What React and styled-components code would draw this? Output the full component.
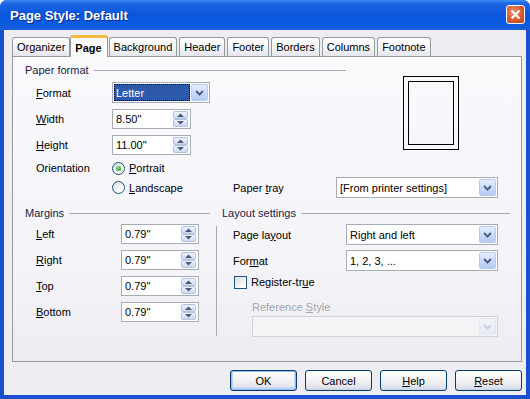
import React from 'react'
import styled, { createGlobalStyle, css } from 'styled-components'

const GlobalStyle = createGlobalStyle`
  html, body { margin: 0; padding: 0; background: #ffffff; }
  body {
    font-family: "Liberation Sans", Arial, sans-serif;
    font-size: 11px;
    color: #000;
  }
`

const Window = styled.div`
  width: 530px;
  height: 399px;
  box-sizing: border-box;
  display: flex;
  flex-direction: column;
  background: #1c4fd0;
  padding: 0 4px 4px 4px;
  border-radius: 7px 7px 0 0;
  overflow: hidden;
`

const TitleBar = styled.div`
  height: 30px;
  margin: 0 -4px;
  padding: 0 5px 0 10px;
  display: flex;
  align-items: center;
  justify-content: space-between;
  background: linear-gradient(#3d8ff6 0%, #1f68e4 10%, #0a56dd 45%, #0b5ae2 80%, #1b5ed8 100%);
`

const Title = styled.div`
  color: #fff;
  font-weight: bold;
  font-size: 13px;
  text-shadow: 1px 1px 0 #0b2a8a;
`

const CloseButton = styled.div`
  width: 19px;
  height: 19px;
  margin-top: -1px;
  box-sizing: border-box;
  border: 1px solid #fff;
  border-radius: 3px;
  background: radial-gradient(circle at 40% 35%, #f0906a, #d9532a 60%, #c2421c);
  display: flex;
  align-items: center;
  justify-content: center;
`

const Body = styled.div`
  flex: 1;
  background: #eeedf2;
  display: flex;
  flex-direction: column;
  padding: 5px 4px 0 8px;
`

const TabRow = styled.div`
  display: flex;
  align-items: flex-end;
  gap: 2px;
  height: 21px;
  position: relative;
  z-index: 1;
`

const Tab = styled.div`
  height: 19px;
  box-sizing: border-box;
  padding: 0 4px;
  display: flex;
  align-items: center;
  border: 1px solid #919b9c;
  border-bottom: none;
  border-radius: 3px 3px 0 0;
  background: linear-gradient(#ffffff, #f3f3f7 60%, #e4e6ee);
  white-space: nowrap;
  ${p => p.$active && css`
    height: 22px;
    margin: 0 -1px -1px -2px;
    padding: 0 5px 0 4px;
    font-weight: bold;
    background: #fbfbfd;
    border-top: 3px solid #f5b83c;
    border-radius: 3px 3px 0 0;
  `}
`

const Panel = styled.div`
  height: 306px;
  box-sizing: border-box;
  border: 1px solid #919b9c;
  background: linear-gradient(#fafafd, #f3f3f8 70%, #ececf2);
  padding: 6px 11px 0 12px;
  display: flex;
  flex-direction: column;
`

const TopSection = styled.div`
  display: flex;
`

const PaperGroup = styled.div`
  width: 321px;
`

const GroupHead = styled.div`
  display: flex;
  align-items: center;
  height: 14px;
  color: #1a1a48;
  &::after {
    content: '';
    flex: 1;
    height: 1px;
    background: #a9a9b0;
    margin-left: 5px;
  }
`

const FormGrid = styled.div`
  display: grid;
  grid-template-columns: 76px auto;
  grid-template-rows: 21px 20px 20px 14px;
  row-gap: 6px;
  align-items: center;
  padding-left: 11px;
  margin-top: 5px;
`

const Label = styled.div`
  white-space: nowrap;
  color: ${p => (p.$disabled ? '#a6a6ac' : '#000')};
  ${p => p.$w && css`width: ${p.$w}px; flex: none;`}
`

const U = styled.span`
  text-decoration: underline;
`

const PreviewArea = styled.div`
  padding: 13px 0 0 57px;
`

const PageOuter = styled.div`
  width: 56px;
  height: 74px;
  box-sizing: border-box;
  border: 1px solid #000;
  padding: 4px;
`

const PageInner = styled.div`
  width: 100%;
  height: 100%;
  box-sizing: border-box;
  border: 1px solid #000;
`

const LandscapeRow = styled.div`
  display: flex;
  align-items: center;
  height: 21px;
  margin-top: 2px;
  padding-left: 87px;
`

const Option = styled.div`
  display: flex;
  align-items: center;
  gap: 4px;
  ${p => p.$w && css`width: ${p.$w}px;`}
`

const Radio = styled.div`
  width: 13px;
  height: 13px;
  box-sizing: border-box;
  border-radius: 50%;
  border: 1px solid #1c5180;
  background: linear-gradient(135deg, #dcdcd6, #ffffff 80%);
  display: flex;
  align-items: center;
  justify-content: center;
  &::after {
    content: '';
    display: ${p => (p.$checked ? 'block' : 'none')};
    width: 5px;
    height: 5px;
    border-radius: 50%;
    background: radial-gradient(circle at 35% 35%, #7ee07e, #1f9d1f);
  }
`

const Checkbox = styled.div`
  width: 13px;
  height: 13px;
  box-sizing: border-box;
  border: 1px solid #1c5180;
  background: linear-gradient(135deg, #dcdcd6, #ffffff 85%);
`

const SelectBox = styled.div`
  width: ${p => p.$w}px;
  height: 21px;
  box-sizing: border-box;
  border: 1px solid ${p => (p.$disabled ? '#cfd3da' : '#a5acb5')};
  background: ${p => (p.$disabled ? '#f4f4f6' : '#fff')};
  display: flex;
  align-items: center;
  padding: 1px;
`

const SelectText = styled.div`
  flex: 1;
  height: 100%;
  display: flex;
  align-items: center;
  padding-left: 2px;
  white-space: nowrap;
  ${p => p.$focused && css`
    background: #2d5aab;
    color: #fff;
    outline: 1px dotted #000;
    outline-offset: -1px;
    margin-right: 1px;
  `}
`

const DropButton = styled.div`
  width: 17px;
  height: 17px;
  box-sizing: border-box;
  border: 1px solid ${p => (p.$disabled ? '#e2e8f4' : '#b8cbef')};
  border-radius: 2px;
  background: ${p => (p.$disabled
    ? 'linear-gradient(#f1f4fa, #e4eaf5)'
    : 'linear-gradient(#e6eefd, #c8d8fa 60%, #b6caf3)')};
  display: flex;
  align-items: center;
  justify-content: center;
`

const SpinBox = styled.div`
  width: ${p => p.$w}px;
  height: 20px;
  box-sizing: border-box;
  border: 1px solid #a5acb5;
  background: #fff;
  display: flex;
  align-items: center;
  padding: 0 2px 0 3px;
`

const SpinValue = styled.div`
  flex: 1;
`

const SpinButtons = styled.div`
  display: flex;
  flex-direction: column;
  width: 15px;
`

const SpinArrow = styled.div`
  height: 8px;
  box-sizing: border-box;
  border: 1px solid #b3c2de;
  border-radius: 2px;
  background: linear-gradient(#eef3fd, #cdd9f2);
  display: flex;
  align-items: center;
  justify-content: center;
`

const BottomGrid = styled.div`
  display: grid;
  grid-template-columns: 185px 12px 1fr;
  grid-template-rows: 14px auto;
  margin-top: 8px;
`

const Separator = styled.div`
  grid-column: 2;
  grid-row: 2;
  justify-self: center;
  width: 1px;
  height: 110px;
  margin-top: 6px;
  background: #a9a9b0;
`

const Column = styled.div`
  grid-row: 2;
  display: flex;
  flex-direction: column;
  padding-left: 11px;
  margin-top: 4px;
`

const Row = styled.div`
  display: flex;
  align-items: center;
  height: ${p => p.$h || 20}px;
  margin-top: ${p => p.$mt || 0}px;
  padding-left: ${p => p.$pl || 0}px;
`

const ButtonRow = styled.div`
  display: flex;
  justify-content: flex-end;
  gap: 8px;
  margin-top: 8px;
`

const Button = styled.div`
  width: 67px;
  height: 21px;
  box-sizing: border-box;
  border: 1px solid #003c74;
  border-radius: 3px;
  background: linear-gradient(#ffffff, #f2f2f4 50%, #e1e4ec 85%, #ccd1dc);
  display: flex;
  align-items: center;
  justify-content: center;
  ${p => p.$default && css`
    box-shadow: inset 0 0 0 1px #98b8ef, inset 0 -1px 0 2px #c6d6f7;
  `}
`

const Chevron = ({ color = '#4b5f86' }) => (
  <svg width="9" height="6" viewBox="0 0 9 6">
    <path d="M1 1 L4.5 4.5 L8 1" fill="none" stroke={color} strokeWidth="2" />
  </svg>
)

const Tri = ({ up }) => (
  <svg width="7" height="4" viewBox="0 0 7 4">
    <path d={up ? 'M0 4 L3.5 0.5 L7 4 Z' : 'M0 0 L3.5 3.5 L7 0 Z'} fill="#4d5a73" />
  </svg>
)

const Select = ({ w, value, focused, disabled }) => (
  <SelectBox $w={w} $disabled={disabled}>
    <SelectText $focused={focused}>{value}</SelectText>
    <DropButton $disabled={disabled}>
      <Chevron color={disabled ? '#c9d3e6' : '#4b5f86'} />
    </DropButton>
  </SelectBox>
)

const Spin = ({ w, value }) => (
  <SpinBox $w={w}>
    <SpinValue>{value}</SpinValue>
    <SpinButtons>
      <SpinArrow><Tri up /></SpinArrow>
      <SpinArrow><Tri /></SpinArrow>
    </SpinButtons>
  </SpinBox>
)

const tabs = ['Organizer', 'Page', 'Background', 'Header', 'Footer', 'Borders', 'Columns', 'Footnote']

const margins = [
  [<><U>L</U>eft</>, '0.79"'],
  [<><U>R</U>ight</>, '0.79"'],
  [<><U>T</U>op</>, '0.79"'],
  [<><U>B</U>ottom</>, '0.79"'],
]

export default function App() {
  return (
    <>
      <GlobalStyle />
      <Window>
        <TitleBar>
          <Title>Page Style: Default</Title>
          <CloseButton>
            <svg width="11" height="11" viewBox="0 0 11 11">
              <path d="M1.5 1.5 L9.5 9.5 M9.5 1.5 L1.5 9.5" stroke="#fff" strokeWidth="2.2" />
            </svg>
          </CloseButton>
        </TitleBar>
        <Body>
          <TabRow>
            {tabs.map(t => (
              <Tab key={t} $active={t === 'Page'}>{t}</Tab>
            ))}
          </TabRow>
          <Panel>
            <TopSection>
              <PaperGroup>
                <GroupHead>Paper format</GroupHead>
                <FormGrid>
                  <Label><U>F</U>ormat</Label>
                  <Select w={98} value="Letter" focused />
                  <Label><U>W</U>idth</Label>
                  <Spin w={79} value={'8.50"'} />
                  <Label><U>H</U>eight</Label>
                  <Spin w={79} value={'11.00"'} />
                  <Label>Orientation</Label>
                  <Option>
                    <Radio $checked />
                    <span><U>P</U>ortrait</span>
                  </Option>
                </FormGrid>
              </PaperGroup>
              <PreviewArea>
                <PageOuter><PageInner /></PageOuter>
              </PreviewArea>
            </TopSection>

            <LandscapeRow>
              <Option $w={121}>
                <Radio />
                <span><U>L</U>andscape</span>
              </Option>
              <Label $w={103}>Paper <U>t</U>ray</Label>
              <Select w={162} value="[From printer settings]" />
            </LandscapeRow>

            <BottomGrid>
              <GroupHead>Margins</GroupHead>
              <div />
              <GroupHead>Layout settings</GroupHead>

              <Column>
                {margins.map(([label, value], i) => (
                  <Row key={i} $mt={i ? 6 : 0}>
                    <Label $w={85}>{label}</Label>
                    <Spin w={78} value={value} />
                  </Row>
                ))}
              </Column>
              <Separator />
              <Column>
                <Row $h={21}>
                  <Label $w={113}>Page la<U>y</U>out</Label>
                  <Select w={152} value="Right and left" />
                </Row>
                <Row $h={21} $mt={5}>
                  <Label $w={113}>For<U>m</U>at</Label>
                  <Select w={152} value="1, 2, 3, ..." />
                </Row>
                <Row $h={14} $mt={4} $pl={1}>
                  <Option>
                    <Checkbox />
                    <span>Register-tr<U>u</U>e</span>
                  </Option>
                </Row>
                <Row $h={14} $mt={11} $pl={19}>
                  <Label $disabled>Reference <U>S</U>tyle</Label>
                </Row>
                <Row $h={21} $mt={2} $pl={19}>
                  <Select w={246} value="" disabled />
                </Row>
              </Column>
            </BottomGrid>
          </Panel>
          <ButtonRow>
            <Button $default>OK</Button>
            <Button>Cancel</Button>
            <Button><span><U>H</U>elp</span></Button>
            <Button><span><U>R</U>eset</span></Button>
          </ButtonRow>
        </Body>
      </Window>
    </>
  )
}
